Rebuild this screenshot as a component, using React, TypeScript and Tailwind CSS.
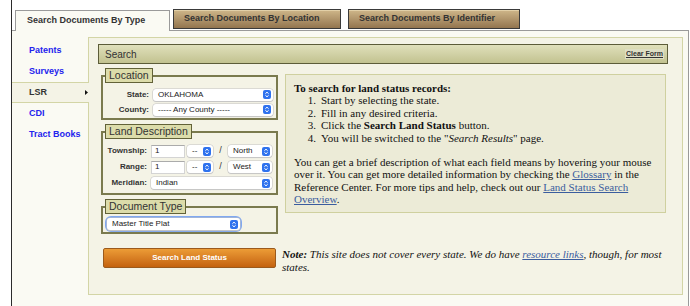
import React from "react";

function Stepper() {
  return (
    <svg width="8" height="9" viewBox="0 0 8 9" className="shrink-0">
      <rect width="8" height="9" rx="2" fill="#2f72ee" />
      <path d="M2.4 3.7 L4 2.2 L5.6 3.7 M2.4 5.3 L4 6.8 L5.6 5.3" stroke="#fff" strokeWidth="1" fill="none" />
    </svg>
  );
}

function Select({ w, value }: { w: string; value: string }) {
  return (
    <div
      className={`${w} h-[12px] bg-white rounded-[3px] shadow-[0_0_0_0.5px_#c2c2c2,0_1px_1px_#c8c8c8] flex items-center pl-[5px] pr-[2px] text-[8px] text-[#222]`}
    >
      <span className="flex-1 whitespace-nowrap leading-none">{value}</span>
      <Stepper />
    </div>
  );
}

function Input({ value }: { value: string }) {
  return (
    <div className="w-[34px] h-[13px] bg-white border border-[#d4d4d4] border-t-[#ababab] flex items-center pl-[3px] text-[8px] text-[#222]">
      {value}
    </div>
  );
}

function Legend({ children }: { children: React.ReactNode }) {
  return (
    <legend className="h-[15px] px-[3px] bg-[#dcdcaa] border-[1.5px] border-[#626238] text-[10.5px] leading-[12px] text-[#333]">
      {children}
    </legend>
  );
}

function Label({ w, children }: { w: string; children: React.ReactNode }) {
  return <div className={`${w} text-right text-[8px] font-bold text-[#333] mr-[4px]`}>{children}</div>;
}

function Tab({ w, children }: { w: string; children: React.ReactNode }) {
  return (
    <div
      className={`${w} h-[20px] mb-[1px] border border-[#3a3a3a] bg-linear-to-b from-[#cfb78a] to-[#93754f] shadow-[inset_0_1px_0_#e2d0a8] flex items-center pl-[10px] text-[9px] font-bold text-[#333] whitespace-nowrap`}
    >
      {children}
    </div>
  );
}

const navItems = ["Patents", "Surveys", "LSR", "CDI", "Tract Books"];

export default function App() {
  return (
    <div className="w-[690px] h-[306px] bg-white overflow-hidden font-['Liberation_Sans',Arial,sans-serif] text-[#333]">
      <div className="ml-[11px] w-[678px] h-full border-l border-[#2b2b2b] flex flex-col">
        {/* Tabs------------------------------------------------------------starts here */}
        <div className="flex items-end h-[31px] shrink-0 border-b border-[#9a9a9a] pl-[3px]">
          <div className="w-[155px] h-[21px] -mb-px bg-[#fafaf3] border border-b-0 border-[#9a9a9a] flex items-center pl-[11px] text-[9px] font-bold text-[#333] whitespace-nowrap">
            Search Documents By Type
          </div>
          <div className="ml-[3px] flex items-end">
            <Tab w="w-[168px]">Search Documents By Location</Tab>
          </div>
          <div className="ml-[7px] flex items-end">
            <Tab w="w-[172px]">Search Documents By Identifier</Tab>
          </div>
        </div>
        {/* Tabs------------------------------------------------------------ends here */}

        <div className="flex-1 bg-[#fafaf3] border-r border-[#9a9a9a] flex pt-[6px]">
          {/* Nav */}
          <div className="w-[76px] shrink-0 pt-[3px]">
            {navItems.map((item) =>
              item === "LSR" ? (
                <div
                  key={item}
                  className="relative z-10 -mr-px h-[21px] bg-[#f4f3e6] border-y border-[#d3d5a6] flex items-center justify-between pl-[17px] pr-[1px] text-[9px] font-bold text-[#333]"
                >
                  <span>LSR</span>
                  <svg width="3" height="5" viewBox="0 0 3 5">
                    <path d="M0 0 L3 2.5 L0 5 Z" fill="#111" />
                  </svg>
                </div>
              ) : (
                <div key={item} className="h-[21px] flex items-center pl-[17px] text-[9px] font-bold text-[#2323ee]">
                  {item}
                </div>
              )
            )}
          </div>

          {/* Panel */}
          <div className="w-[595px] h-[258px] shrink-0 border border-[#d3d5a6] bg-[#f4f3e6] pt-[6px] pl-[9px] pr-[14px]">
            <div className="h-[20px] border border-[#5c5c38] bg-linear-to-b from-[#e0e0bb] to-[#c2c290] flex items-center justify-between pl-[6px] pr-[3px]">
              <span className="text-[10px] text-[#333]">Search</span>
              <span className="text-[7px] font-bold underline text-[#333] bg-[#dedec4] px-px">Clear Form</span>
            </div>

            <div className="flex">
              {/* Fields */}
              <div className="w-[177px] ml-[3px] mt-[4px] flex flex-col gap-[4px] shrink-0">
                <fieldset className="border-2 border-[#7a7a4e] px-[2px] pb-[1px]">
                  <Legend>Location</Legend>
                  <div className="pt-[4px]">
                    <div className="h-[15px] flex items-center">
                      <Label w="w-[44px]">State:</Label>
                      <Select w="w-[120px]" value="OKLAHOMA" />
                    </div>
                    <div className="h-[15px] flex items-center">
                      <Label w="w-[44px]">County:</Label>
                      <Select w="w-[120px]" value="----- Any County -----" />
                    </div>
                  </div>
                </fieldset>

                <fieldset className="border-2 border-[#7a7a4e] px-[2px] pb-[2px]">
                  <Legend>Land Description</Legend>
                  <div className="pt-[4px]">
                    <div className="h-[16px] flex items-center">
                      <Label w="w-[42px]">Township:</Label>
                      <Input value="1" />
                      <div className="ml-[2px]">
                        <Select w="w-[26px]" value="--" />
                      </div>
                      <div className="w-[15px] text-center text-[9px] text-[#333]">/</div>
                      <Select w="w-[44px]" value="North" />
                    </div>
                    <div className="h-[16px] flex items-center">
                      <Label w="w-[42px]">Range:</Label>
                      <Input value="1" />
                      <div className="ml-[2px]">
                        <Select w="w-[26px]" value="--" />
                      </div>
                      <div className="w-[15px] text-center text-[9px] text-[#333]">/</div>
                      <Select w="w-[44px]" value="West" />
                    </div>
                    <div className="h-[16px] flex items-center">
                      <Label w="w-[42px]">Meridian:</Label>
                      <Select w="w-[121px]" value="Indian" />
                    </div>
                  </div>
                </fieldset>

                <fieldset className="border-2 border-[#7a7a4e] px-[2px] pb-[2px]">
                  <Legend>Document Type</Legend>
                  <div className="pt-[4px] pl-[2px]">
                    <div className="w-[133px] rounded-[4px] ring-2 ring-[#80a8f0]">
                      <Select w="w-[133px]" value="Master Title Plat" />
                    </div>
                  </div>
                </fieldset>
              </div>

              {/* Info box */}
              <div className="ml-[7px] mt-[10px] w-[381px] h-[139px] border border-[#cfd09f] bg-[#ecebd7] px-[8px] pt-[7px] font-['Liberation_Serif','Times_New_Roman',serif] text-[11px] leading-[12.4px] text-[#111] whitespace-nowrap">
                <div className="font-bold">To search for land status records:</div>
                {[
                  <>Start by selecting the state.</>,
                  <>Fill in any desired criteria.</>,
                  <>
                    Click the <b>Search Land Status</b> button.
                  </>,
                  <>
                    You will be switched to the "<i>Search Results</i>" page.
                  </>,
                ].map((t, i) => (
                  <div key={i} className="flex">
                    <span className="w-[27px] text-right pr-[5px]">{i + 1}.</span>
                    <span>{t}</span>
                  </div>
                ))}
                <div className="mt-[12px]">
                  <div>You can get a brief description of what each field means by hovering your mouse</div>
                  <div>
                    over it. You can get more detailed information by checking the{" "}
                    <span className="text-[#3b5d9e] underline">Glossary</span> in the
                  </div>
                  <div>
                    Reference Center. For more tips and help, check out our{" "}
                    <span className="text-[#3b5d9e] underline">Land Status Search</span>
                  </div>
                  <div>
                    <span className="text-[#3b5d9e] underline">Overview</span>.
                  </div>
                </div>
              </div>
            </div>

            {/* Button + note */}
            <div className="flex mt-[14px] pl-[5px]">
              <button className="w-[173px] h-[20px] shrink-0 rounded-[2px] border border-[#9b5a1c] bg-linear-to-b from-[#ec9c36] to-[#c4620e] text-white text-[8px] font-bold">
                Search Land Status
              </button>
              <p className="ml-[6px] font-['Liberation_Serif','Times_New_Roman',serif] italic text-[11px] leading-[13px] text-[#111] whitespace-nowrap">
                <b>Note:</b> This site does not cover every state. We do have{" "}
                <span className="text-[#3b5d9e] underline">resource links</span>, though, for most
                <br />
                states.
              </p>
            </div>
          </div>
        </div>
      </div>
    </div>
  );
}
